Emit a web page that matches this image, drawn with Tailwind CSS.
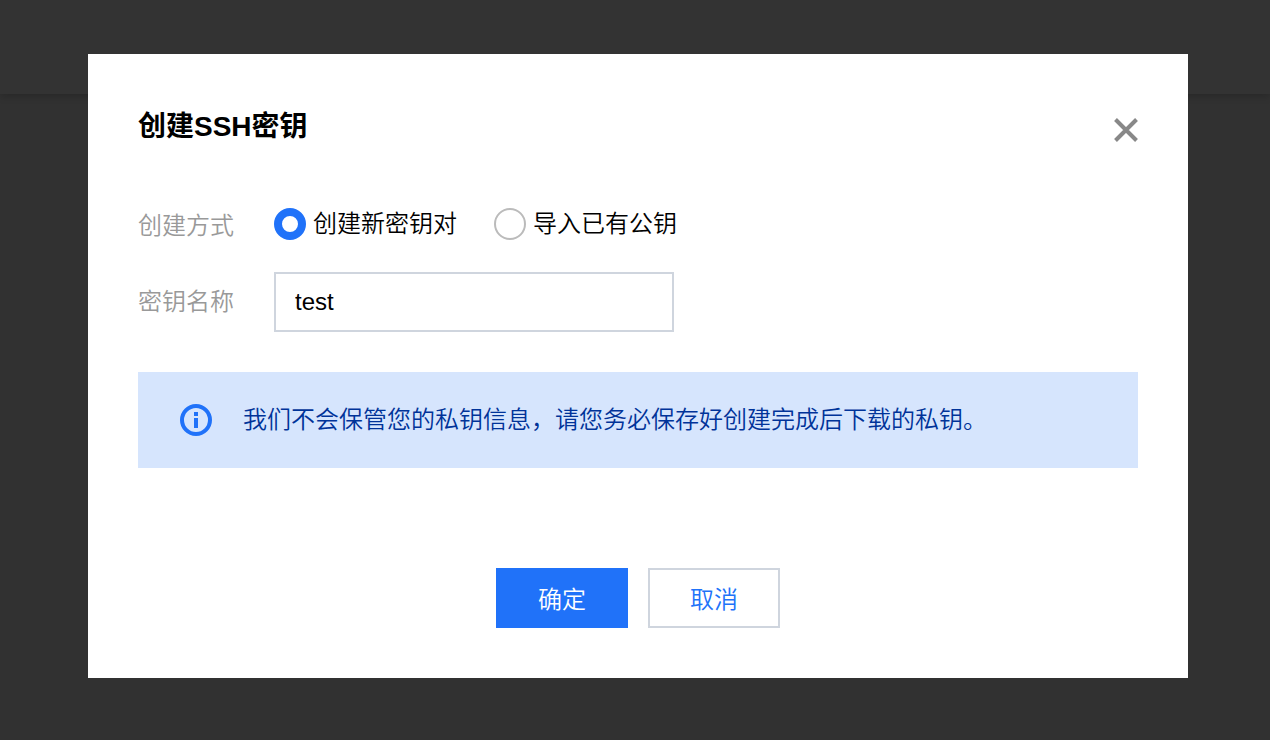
<!DOCTYPE html>
<html lang="zh-CN">
<head>
    <meta charset="UTF-8">
    <meta name="viewport" content="width=device-width, initial-scale=1.0">
    <title>创建SSH密钥</title>
    <script src="https://cdn.jsdelivr.net/npm/@tailwindcss/browser@4"></script>
</head>
<body class="min-h-screen bg-[#313131] font-['Liberation_Sans','Noto_Sans_CJK_SC',sans-serif] text-2xl font-[350] text-black">
    <!-- Dimmed page header behind the dialog -->
    <header class="h-[94px] bg-[#333333] shadow-[0_2px_8px_rgba(0,0,0,0.2)]"></header>

    <div class="absolute inset-0 flex items-start justify-center pt-[54px] pr-[82px] pb-[62px] pl-[88px]">
        <div role="dialog" aria-modal="true" aria-labelledby="dialogTitle" class="w-full max-w-[1100px] bg-white p-[50px]">
            <div class="flex items-center justify-between pb-[58px]">
                <h1 id="dialogTitle" class="text-[28px] leading-[46px] font-bold">创建SSH密钥</h1>
                <button type="button" aria-label="关闭" class="mt-1.5 text-[#888888]">
                    <svg class="h-6 w-6" viewBox="0 0 24 24" fill="none" stroke="currentColor" stroke-width="4">
                        <path d="M1.5 1.5 22.5 22.5M22.5 1.5 1.5 22.5"></path>
                    </svg>
                </button>
            </div>

            <form>
                <div class="flex items-center pb-8">
                    <span id="modeLabel" class="w-[136px] pt-1 leading-7 text-[#999999]">创建方式</span>
                    <div role="radiogroup" aria-labelledby="modeLabel" class="flex gap-[37px]">
                        <label class="flex items-center gap-[7px] leading-8">
                            <input type="radio" name="mode" checked class="h-8 w-8 appearance-none rounded-full border-2 border-[#bbbbbb] checked:border-8 checked:border-[#2072f9]">
                            创建新密钥对
                        </label>
                        <label class="flex items-center gap-[7px] leading-8">
                            <input type="radio" name="mode" class="h-8 w-8 appearance-none rounded-full border-2 border-[#bbbbbb] checked:border-8 checked:border-[#2072f9]">
                            导入已有公钥
                        </label>
                    </div>
                </div>

                <div class="flex items-center pb-10">
                    <label for="keyName" class="w-[136px] text-[#999999]">密钥名称</label>
                    <input type="text" id="keyName" value="test" class="h-[60px] w-[400px] border-2 border-[#cfd5de] px-[19px] focus:outline-none focus:border-[#2072f9]">
                </div>

                <div class="flex items-center gap-[31px] bg-[#d6e5fd] px-[42px] py-8 leading-8 text-[#003399]">
                    <svg class="h-8 w-8 shrink-0 text-[#2072f9]" viewBox="0 0 32 32" fill="none">
                        <circle cx="16" cy="16" r="14" stroke="currentColor" stroke-width="4"></circle>
                        <path fill="currentColor" d="M14 8h4v4h-4zM14 14h4v10h-4z"></path>
                    </svg>
                    <p>我们不会保管您的私钥信息，请您务必保存好创建完成后下载的私钥。</p>
                </div>

                <div class="flex justify-center gap-5 pt-[100px]">
                    <button type="button" class="h-[60px] w-[132px] border-2 border-[#2072f9] bg-[#2072f9] pt-1 text-white hover:bg-[#0f62e8]">确定</button>
                    <button type="button" class="h-[60px] w-[132px] border-2 border-[#cfd5de] bg-white pt-1 text-[#2072f9] hover:bg-gray-50">取消</button>
                </div>
            </form>
        </div>
    </div>
</body>
</html>
